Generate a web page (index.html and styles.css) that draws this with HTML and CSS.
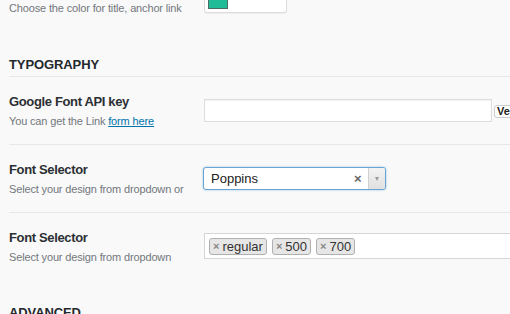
FILE: index.html
```html
<!DOCTYPE html>
<html>
<head>
<meta charset="utf-8">
<link rel="stylesheet" href="styles.css">
</head>
<body>
<div class="page">
  <div class="row top">
    <div class="label">
      <p class="desc">Choose the color for title, anchor link</p>
    </div>
    <div class="field">
      <div class="color-box"><span class="swatch"></span></div>
    </div>
  </div>

  <h2 class="section">TYPOGRAPHY</h2>

  <div class="row bordered">
    <div class="label">
      <h3 class="title">Google Font API key</h3>
      <p class="desc">You can get the Link <a href="#" class="link">form here</a></p>
    </div>
    <div class="field field-input">
      <input class="text-input" type="text">
      <button class="btn">Verify</button>
    </div>
  </div>

  <div class="row bordered">
    <div class="label">
      <h3 class="title">Font Selector</h3>
      <p class="desc">Select your design from dropdown or</p>
    </div>
    <div class="field field-select">
      <div class="select">
        <span class="select-value">Poppins</span>
        <span class="select-clear">×</span>
        <span class="select-arrow"><span class="tri"></span></span>
      </div>
    </div>
  </div>

  <div class="row">
    <div class="label">
      <h3 class="title">Font Selector</h3>
      <p class="desc">Select your design from dropdown</p>
    </div>
    <div class="field field-multi">
      <div class="multi">
        <span class="tag"><span class="tag-x">×</span>regular</span>
        <span class="tag"><span class="tag-x">×</span>500</span>
        <span class="tag"><span class="tag-x">×</span>700</span>
      </div>
    </div>
  </div>

  <h2 class="section advanced">ADVANCED</h2>
</div>
</body>
</html>
```
FILE: styles.css
```css
html, body {
  margin: 0;
  padding: 0;
  background: #f9f9f9;
  width: 510px;
  height: 314px;
  overflow: hidden;
}
.page {
  padding-left: 9px;
  font-family: "Liberation Sans", Arial, sans-serif;
  color: #23282d;
}
.row {
  display: flex;
  padding: 17px 0 16px;
}
.row.top {
  padding: 1px 0 0;
}
.row.bordered {
  border-bottom: 1px solid #e8e8e8;
}
.label {
  width: 195px;
  flex: none;
}
.field {
  flex: none;
}
.title {
  margin: 0;
  font-size: 13px;
  line-height: 16px;
  font-weight: 700;
  letter-spacing: -0.35px;
  color: #2b2f33;
}
.desc {
  margin: 4px 0 0;
  font-size: 11px;
  line-height: 14px;
  letter-spacing: -0.15px;
  color: #72777c;
}
.row.top .desc {
  margin: 0;
}
.link {
  color: #0073aa;
  text-decoration: underline;
}
.color-box {
  margin-top: -14px;
  width: 75px;
  height: 18px;
  padding: 3px;
  border: 1px solid #dcdcdc;
  border-radius: 3px;
  background: #fff;
  box-shadow: 0 1px 1px rgba(0,0,0,0.05);
}
.swatch {
  display: block;
  width: 20px;
  height: 18px;
  background: #1fbc97;
  border: 1px solid #4a6e64;
  box-sizing: border-box;
}
.section {
  margin: 42px 0 0;
  padding-bottom: 3px;
  font-size: 13px;
  line-height: 16px;
  font-weight: 700;
  letter-spacing: -0.1px;
  color: #23282d;
  border-bottom: 1px solid #e8e8e8;
}
.section.advanced {
  margin-top: 25px;
  border-bottom: none;
}
.field-input {
  display: flex;
  align-items: center;
  gap: 2px;
  margin-top: 5px;
  align-self: flex-start;
}
.text-input {
  box-sizing: border-box;
  width: 288px;
  height: 23px;
  margin: 0;
  padding: 0;
  border: 1px solid #dedede;
  background: #fff;
  box-shadow: inset 0 1px 2px rgba(0,0,0,0.06);
  outline: none;
  display: block;
}
.btn {
  margin: 1px 0 0;
  height: 13px;
  padding: 0 2px;
  font-family: "Liberation Sans", Arial, sans-serif;
  font-size: 11px;
  line-height: 11px;
  font-weight: 700;
  color: #222;
  background: #fff;
  border: 1px solid #ccc;
  border-radius: 3px;
  white-space: nowrap;
}
.field-select {
  margin-top: 5px;
  align-self: flex-start;
}
.select {
  box-sizing: border-box;
  width: 183px;
  height: 23px;
  margin-left: -1px;
  display: flex;
  align-items: center;
  background: #fff;
  border: 1px solid #6aa3d6;
  border-radius: 3px;
  box-shadow: 0 0 2px rgba(30,140,190,0.5);
  overflow: hidden;
}
.select-value {
  flex: 1;
  padding-left: 7px;
  font-size: 13px;
  color: #222;
}
.select-clear {
  width: 14px;
  font-size: 13px;
  font-weight: 700;
  color: #666;
}
.select-arrow {
  align-self: stretch;
  width: 16px;
  border-left: 1px solid #d0d0d0;
  background: linear-gradient(#f3f3f3, #e0e0e0);
  display: flex;
  align-items: center;
  justify-content: center;
}
.tri {
  width: 0;
  height: 0;
  border-left: 2.5px solid transparent;
  border-right: 2.5px solid transparent;
  border-top: 4px solid #999;
}
.field-multi {
  margin-top: 3px;
  align-self: flex-start;
}
.multi {
  box-sizing: border-box;
  width: 340px;
  height: 26px;
  padding: 2px 4px;
  display: flex;
  align-items: center;
  gap: 5px;
  background: #fff;
  border: 1px solid #d6d6d6;
}
.tag {
  box-sizing: border-box;
  height: 17px;
  padding: 0 3px;
  display: flex;
  align-items: center;
  font-size: 13px;
  color: #333;
  background: #e6e6e6;
  border: 1px solid #b0b0b0;
  border-radius: 3px;
}
.tag-x {
  font-size: 11px;
  font-weight: 700;
  color: #888;
  margin-right: 3px;
}
```
